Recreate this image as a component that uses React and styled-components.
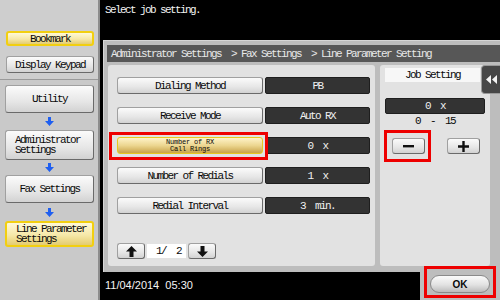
import React from "react";
import styled, { createGlobalStyle, css } from "styled-components";

const GlobalStyle = createGlobalStyle`
  html, body {
    margin: 0;
    padding: 0;
    background: #000;
  }
  * {
    box-sizing: border-box;
  }
`;

const mono = css`
  font-family: "Liberation Mono", "DejaVu Sans Mono", monospace;
  font-size: 11px;
  letter-spacing: -1.6px;
`;

const Screen = styled.div`
  display: flex;
  width: 500px;
  height: 300px;
  overflow: hidden;
  background: #000;
  ${mono};
  color: #0a0a0a;
`;

const Sidebar = styled.div`
  width: 100px;
  display: flex;
  flex-direction: column;
  background: #c9c9c9;
  border-right: 2px solid #8c8c8c;
`;

const SideTop = styled.div`
  height: 80px;
  display: flex;
  flex-direction: column;
  gap: 10px;
  padding: 31px 4px 0 6px;
  background: #cecece;
  border-bottom: 1px solid #9a9a9a;
`;

const SideFlow = styled.div`
  display: flex;
  flex-direction: column;
  align-items: stretch;
  padding: 5px 4px 0 5px;
`;

const raised = css`
  background: linear-gradient(#fbfbfb, #e6e6e6 60%, #d2d2d2);
  border: 1px solid #a0a0a0;
  border-right-color: #6a6a6a;
  border-bottom-color: #6a6a6a;
  border-radius: 3px;
`;

const yellow = css`
  background: linear-gradient(#fff9d8, #f6e8a8 55%, #e4cc70);
  border: 2px solid #f2cf10;
  border-radius: 3px;
`;

const SideButton = styled.div`
  ${({ $active }) => ($active ? yellow : raised)};
  height: ${({ $h }) => $h}px;
  display: flex;
  align-items: center;
  justify-content: ${({ $left }) => ($left ? "flex-start" : "center")};
  padding-left: ${({ $left }) => ($left ? "9px" : "0")};
  line-height: 10px;
  white-space: pre;
`;

const FlowArrow = styled.div`
  height: ${({ $h }) => $h}px;
  display: flex;
  align-items: center;
  justify-content: center;
`;

const Main = styled.div`
  flex: 1;
  display: flex;
  flex-direction: column;
`;

const Message = styled.div`
  height: 40px;
  padding: 4px 0 0 5px;
  color: #f2f2f2;
`;

const Panel = styled.div`
  position: relative;
  height: 232px;
  margin-left: 3px;
  padding: 4px 0 0 3px;
  background: #bdbdbd;
  border-top: 1px solid #d6d6d6;
  border-left: 1px solid #d6d6d6;
  display: flex;
  flex-direction: column;
`;

const Crumbs = styled.div`
  height: 17px;
  display: flex;
  align-items: center;
  gap: 10px;
  padding-left: 4px;
  background: #575757;
  color: #e8e8e8;
  white-space: pre;
`;

const Body = styled.div`
  display: flex;
  gap: 5px;
  margin-top: 3px;
  padding-left: 1px;
`;

const Inner = styled.div`
  width: ${({ $w }) => $w}px;
  height: 201px;
  background: #e2e2e2;
  border-radius: 3px;
  display: flex;
  flex-direction: column;
`;

const ListPanel = styled(Inner)`
  padding: 12px 5px 7px 9px;
  gap: 13px;
`;

const Row = styled.div`
  display: flex;
  gap: 2px;
  height: 17px;
`;

const RowButton = styled.div`
  position: relative;
  width: 146px;
  display: flex;
  align-items: center;
  justify-content: center;
  ${({ $active }) =>
    $active
      ? css`
          background: linear-gradient(#fff3c8, #ecd690 50%, #c9a44a);
          border: 1px solid #e8c820;
          border-radius: 3px;
          font-size: 7px;
          letter-spacing: -0.2px;
          line-height: 7px;
          flex-direction: column;
        `
      : raised};
`;

const Mark = styled.div`
  position: absolute;
  top: ${({ $t }) => $t}px;
  bottom: ${({ $b }) => $b}px;
  left: ${({ $l }) => $l}px;
  right: ${({ $r }) => $r}px;
  border: 3px solid #ee0000;
  pointer-events: none;
`;

const Value = styled.div`
  flex: 1;
  display: flex;
  align-items: center;
  justify-content: center;
  background: #333;
  border: 1px solid #1e1e1e;
  border-radius: 2px;
  color: #f0f0f0;
  white-space: pre;
`;

const Pager = styled.div`
  margin-top: auto;
  display: flex;
  align-items: center;
  gap: 2px;
  height: 16px;
`;

const SmallButton = styled.div`
  ${raised};
  position: relative;
  width: ${({ $w }) => $w}px;
  height: 16px;
  display: flex;
  align-items: center;
  justify-content: center;
`;

const PageBox = styled.div`
  width: 39px;
  height: 14px;
  background: #fff;
  display: flex;
  align-items: center;
  padding-left: 9px;
  white-space: pre;
`;

const JobPanel = styled(Inner)`
  padding: 3px 5px 0 5px;
`;

const JobLabel = styled.div`
  width: 95px;
  height: 14px;
  background: #f7f7f7;
  display: flex;
  align-items: center;
  justify-content: center;
`;

const JobValue = styled(Value)`
  flex: none;
  width: 100px;
  height: 16px;
  margin-top: 16px;
`;

const Range = styled.div`
  width: 100px;
  height: 14px;
  text-align: center;
  line-height: 14px;
  white-space: pre;
`;

const StepRow = styled.div`
  width: 100px;
  display: flex;
  justify-content: space-between;
  padding: 0 5px 0 7px;
  margin-top: 10px;
`;

const SideTab = styled.div`
  position: absolute;
  right: 0;
  top: 24px;
  width: 19px;
  height: 29px;
  background: #474747;
  border: 1px solid #9a9a9a;
  border-right: none;
  border-radius: 4px 0 0 4px;
  display: flex;
  align-items: center;
  justify-content: center;
`;

const Footer = styled.div`
  flex: 1;
  display: flex;
  justify-content: space-between;
`;

const DateText = styled.div`
  padding: 7px 0 0 5px;
  font-family: "Liberation Sans", Arial, sans-serif;
  font-size: 11px;
  letter-spacing: 0;
  color: #f4f4f4;
  white-space: pre;
`;

const OkTab = styled.div`
  width: 80px;
  background: #bdbdbd;
  padding: 3px 0 0 10px;
`;

const OkButton = styled.div`
  position: relative;
  width: 60px;
  height: 18px;
  border-radius: 9px;
  background: linear-gradient(#fafafa, #e2e2e2 55%, #bcbcbc);
  border: 1px solid #8a8a8a;
  display: flex;
  align-items: center;
  justify-content: center;
  font-family: "Liberation Sans", Arial, sans-serif;
  font-weight: bold;
  font-size: 10px;
  letter-spacing: 0;
`;

const BlueArrow = () => (
  <svg width="9" height="9" viewBox="0 0 9 9">
    <path d="M3 0h3v4h3L4.5 9 0 4h3z" fill="#1f5ff0" />
  </svg>
);

const Arrow = ({ up }) => (
  <svg width="11" height="11" viewBox="0 0 11 11">
    <path
      d={up ? "M5.5 0L11 5.5H7.5V11h-4V5.5H0z" : "M5.5 11L11 5.5H7.5V0h-4v5.5H0z"}
      fill="#111"
    />
  </svg>
);

const Rewind = () => (
  <svg width="11" height="9" viewBox="0 0 11 9">
    <path d="M5 0v9L0 4.5z M11 0v9L6 4.5z" fill="#f4f4f4" />
  </svg>
);

const rows = [
  { label: "Dialing Method", value: "PB" },
  { label: "Receive Mode", value: "Auto RX" },
  { label: "Number of RX\nCall Rings", value: "0  x", active: true },
  { label: "Number of Redials", value: "1  x" },
  { label: "Redial Interval", value: "3  min." },
];

const App = () => {
  return (
    <>
      <GlobalStyle />
      <Screen>
        <Sidebar>
          <SideTop>
            <SideButton $h={15} $active>
              Bookmark
            </SideButton>
            <SideButton $h={17}>Display Keypad</SideButton>
          </SideTop>
          <SideFlow>
            <SideButton $h={28}>Utility</SideButton>
            <FlowArrow $h={17}>
              <BlueArrow />
            </FlowArrow>
            <SideButton $h={30} $left>
              {"Administrator\nSettings"}
            </SideButton>
            <FlowArrow $h={15}>
              <BlueArrow />
            </FlowArrow>
            <SideButton $h={28}>Fax Settings</SideButton>
            <FlowArrow $h={18}>
              <BlueArrow />
            </FlowArrow>
            <SideButton $h={26} $left $active>
              {"Line Parameter\nSettings"}
            </SideButton>
          </SideFlow>
        </Sidebar>

        <Main>
          <Message>Select job setting.</Message>
          <Panel>
            <Crumbs>
              <span>Administrator Settings</span>
              <span>{"> Fax Settings"}</span>
              <span>{"> Line Parameter Setting"}</span>
            </Crumbs>
            <Body>
              <ListPanel $w={267}>
                {rows.map((row) => (
                  <Row key={row.label}>
                    <RowButton $active={row.active}>
                      {row.active ? (
                        <>
                          <span>Number of RX</span>
                          <span>Call Rings</span>
                          <Mark $t={-6} $b={-7} $l={-9} $r={-6} />
                        </>
                      ) : (
                        row.label
                      )}
                    </RowButton>
                    <Value>{row.value}</Value>
                  </Row>
                ))}
                <Pager>
                  <SmallButton $w={28}>
                    <Arrow up />
                  </SmallButton>
                  <PageBox>{"1/  2"}</PageBox>
                  <SmallButton $w={28}>
                    <Arrow />
                  </SmallButton>
                </Pager>
              </ListPanel>
              <JobPanel $w={110}>
                <JobLabel>Job Setting</JobLabel>
                <JobValue>{"0  x"}</JobValue>
                <Range>{"0  -  15"}</Range>
                <StepRow>
                  <SmallButton $w={33}>
                    <svg width="11" height="3" viewBox="0 0 11 3">
                      <rect width="11" height="2.4" fill="#111" />
                    </svg>
                    <Mark $t={-9} $b={-9} $l={-9} $r={-7} />
                  </SmallButton>
                  <SmallButton $w={33}>
                    <svg width="11" height="11" viewBox="0 0 11 11">
                      <path d="M4.3 0h2.4v4.3H11v2.4H6.7V11H4.3V6.7H0V4.3h4.3z" fill="#111" />
                    </svg>
                  </SmallButton>
                </StepRow>
              </JobPanel>
            </Body>
            <SideTab>
              <Rewind />
            </SideTab>
          </Panel>
          <Footer>
            <DateText>{"11/04/2014  05:30"}</DateText>
            <OkTab>
              <OkButton>
                OK
                <Mark $t={-10} $b={-6} $l={-7} $r={-7} />
              </OkButton>
            </OkTab>
          </Footer>
        </Main>
      </Screen>
    </>
  );
};

export default App;
